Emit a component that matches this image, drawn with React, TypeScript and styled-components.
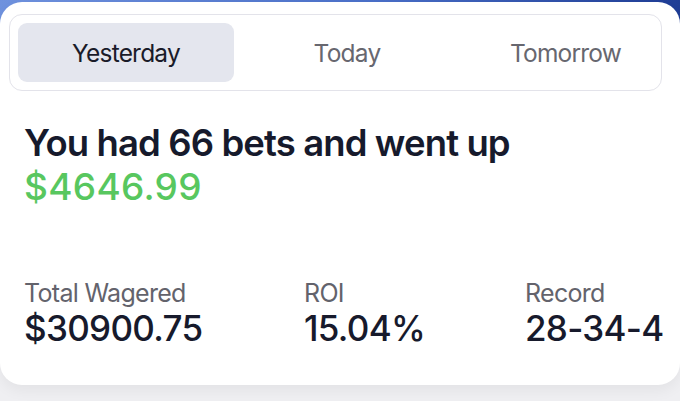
import React, { useState } from 'react'
import styled, { createGlobalStyle } from 'styled-components'

const GlobalStyle = createGlobalStyle`
    html, body {
        margin: 0;
        padding: 0;
        background: #efeff2;
        font-family: Inter, "Noto Sans", Roboto, sans-serif;
    }
`

const tabs = ['Yesterday', 'Today', 'Tomorrow']

const stats = [
    { label: 'Total Wagered', value: '$30900.75' },
    { label: 'ROI', value: '15.04%' },
    { label: 'Record', value: '28-34-4' },
]

export default () => {
    const [active, setActive] = useState(0)

    return (
        <Page>
            <GlobalStyle />
            <Card>
                <Segmented>
                    {tabs.map((t, i) => (
                        <Tab key={t} $active={i === active} $index={i} onClick={() => setActive(i)}>
                            {t}
                        </Tab>
                    ))}
                </Segmented>
                <Summary>
                    <Headline>You had 66 bets and went up</Headline>
                    <Amount>$4646.99</Amount>
                </Summary>
                <StatsRow>
                    {stats.map(s => (
                        <Stat key={s.label}>
                            <StatLabel>{s.label}</StatLabel>
                            <StatValue>{s.value}</StatValue>
                        </Stat>
                    ))}
                </StatsRow>
            </Card>
        </Page>
    )
}

// STYLE PROPERTIES
const Page = styled.div`
    width: 680px;
    height: 401px;
    overflow: hidden;
    padding-top: 2px;
    box-sizing: border-box;
    background:
        linear-gradient(#efeff2, #efeff2) 0 40px / 100% 100% no-repeat,
        linear-gradient(90deg, #6f92de 0%, #4a6fc8 55%, #1f3d95 100%);
`
const Card = styled.div`
    width: 680px;
    height: 383px;
    box-sizing: border-box;
    background: #ffffff;
    border-radius: 22px;
    box-shadow: 0 6px 14px rgba(0, 0, 0, 0.05);
    padding: 12px 0 0 9px;
    display: flex;
    flex-direction: column;
`
const Segmented = styled.div`
    width: 653px;
    height: 77px;
    box-sizing: border-box;
    border: 1.5px solid #e3e3ea;
    border-radius: 13px;
    padding: 8px;
    display: grid;
    grid-template-columns: 216px 226px 1fr;
`
const Tab = styled.div<{ $active: boolean; $index: number }>`
    display: flex;
    align-items: center;
    justify-content: center;
    padding-left: ${p => (p.$index === 2 ? 18 : 0)}px;
    border-radius: 9px;
    background: ${p => (p.$active ? '#e4e6ee' : 'transparent')};
    color: ${p => (p.$active ? '#1a1b29' : '#67676f')};
    font-size: 24.5px;
    letter-spacing: -0.8px;
    cursor: pointer;
`
const Summary = styled.div`
    padding: 30px 0 0 15px;
`
const Headline = styled.div`
    color: #161a2c;
    font-size: 36.5px;
    font-weight: 600;
    letter-spacing: -0.9px;
    line-height: 44px;
`
const Amount = styled.div`
    color: #58c75f;
    font-size: 37px;
    font-weight: 500;
    letter-spacing: 0.3px;
    line-height: 44px;
`
const StatsRow = styled.div`
    display: grid;
    grid-template-columns: 280px 221px 1fr;
    padding: 69px 0 0 15px;
`
const Stat = styled.div`
    display: flex;
    flex-direction: column;
`
const StatLabel = styled.div`
    color: #63636c;
    font-size: 25px;
    letter-spacing: -0.7px;
    line-height: 30px;
`
const StatValue = styled.div`
    color: #171a2c;
    font-size: 35px;
    font-weight: 500;
    letter-spacing: -0.7px;
    line-height: 40px;
`
